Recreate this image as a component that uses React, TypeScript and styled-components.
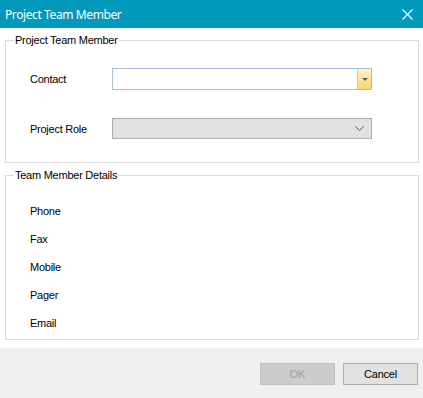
import React from "react";
import styled, {createGlobalStyle} from "styled-components";

const GlobalStyle = createGlobalStyle`
  html, body {
    margin: 0;
    padding: 0;
    background: #ffffff;
  }
`;

const LABEL_FONT = `"Liberation Sans", Arial, sans-serif`;

function CloseIcon() {
    return (
        <svg width="11" height="11" viewBox="0 0 11 11">
            <path d="M0.5 0.5 L10.5 10.5 M10.5 0.5 L0.5 10.5" stroke="#ffffff" strokeWidth="1.1" fill="none"/>
        </svg>
    );
}

function Chevron() {
    return (
        <svg width="9" height="5" viewBox="0 0 9 5">
            <path d="M0.5 0.5 L4.5 4.5 L8.5 0.5" stroke="#555555" strokeWidth="1" fill="none"/>
        </svg>
    );
}

function App() {
    const details = ["Phone", "Fax", "Mobile", "Pager", "Email"];

    return (
        <Window>
            <GlobalStyle/>
            <TitleBar>
                <Title>Project Team Member</Title>
                <CloseButton><CloseIcon/></CloseButton>
            </TitleBar>
            <Body>
                <Group top={5}>
                    <Legend>Project Team Member</Legend>
                    <GroupContent bottomPad={23}>
                        <FieldRow>
                            <Label>Contact</Label>
                            <ContactCombo>
                                <ComboText/>
                                <DropButton><Triangle/></DropButton>
                            </ContactCombo>
                        </FieldRow>
                        <FieldRow gap={28}>
                            <Label>Project Role</Label>
                            <RoleCombo>
                                <ComboText/>
                                <ChevronBox><Chevron/></ChevronBox>
                            </RoleCombo>
                        </FieldRow>
                    </GroupContent>
                </Group>
                <Group top={5}>
                    <Legend>Team Member Details</Legend>
                    <GroupContent bottomPad={2}>
                        <DetailList>
                            {details.map(name => <DetailRow key={name}>{name}</DetailRow>)}
                        </DetailList>
                    </GroupContent>
                </Group>
            </Body>
            <Footer>
                <DialogButton disabled>OK</DialogButton>
                <DialogButton>Cancel</DialogButton>
            </Footer>
        </Window>
    );
}

const Window = styled.div`
  width: 423px;
  height: 398px;
  display: flex;
  flex-direction: column;
  background: #ffffff;
  overflow: hidden;
`

const TitleBar = styled.div`
  height: 28px;
  flex: none;
  background: #0099bc;
  display: flex;
  align-items: center;
  justify-content: space-between;
  padding: 0 10px 0 5px;
`

const Title = styled.span`
  color: #ffffff;
  font-family: "Noto Sans", "Open Sans", sans-serif;
  font-size: 12px;
  letter-spacing: -0.4px;
`

const CloseButton = styled.div`
  display: flex;
  align-items: center;
  padding-top: 1px;
`

const Body = styled.div`
  flex: 1;
  padding: 0 4px 0 5px;
`

const Group = styled.fieldset<{top: number}>`
  margin: ${({top}) => top}px 0 0 0;
  border: 1px solid #dcdcdc;
  padding: 0;
  font-family: ${LABEL_FONT};
  font-size: 11px;
  letter-spacing: -0.25px;
  color: #000000;
`

const Legend = styled.legend`
  margin-left: 8px;
  padding: 0 1px;
  line-height: 14px;
  font-size: 11px;
`

const GroupContent = styled.div<{bottomPad: number}>`
  padding: 0 0 ${({bottomPad}) => bottomPad}px 24px;
`

const FieldRow = styled.div<{gap?: number}>`
  display: grid;
  grid-template-columns: 82px 260px;
  align-items: center;
  margin-top: ${({gap}) => gap ?? 21}px;
`

const Label = styled.span`
  line-height: 14px;
`

const ComboBase = styled.div`
  display: flex;
  box-sizing: border-box;
`

const ContactCombo = styled(ComboBase)`
  height: 22px;
  border: 1px solid #a9bedf;
  background: #ffffff;
`

const RoleCombo = styled(ComboBase)`
  height: 21px;
  border: 1px solid #adadad;
  background: #e1e1e1;
`

const ComboText = styled.div`
  flex: 1;
`

const DropButton = styled.div`
  width: 13px;
  border-left: 1px solid #e3c77a;
  background: linear-gradient(to bottom, #fff4cc 0%, #ffe595 50%, #fdd46f 100%);
  display: flex;
  align-items: center;
  justify-content: center;
`

const Triangle = styled.div`
  width: 0;
  height: 0;
  border-left: 3px solid transparent;
  border-right: 3px solid transparent;
  border-top: 3px solid #4d6185;
  margin-top: 1px;
`

const ChevronBox = styled.div`
  width: 20px;
  display: flex;
  align-items: center;
  justify-content: center;
  padding-right: 2px;
`

const DetailList = styled.div`
  display: flex;
  flex-direction: column;
  padding-top: 15px;
`

const DetailRow = styled.div`
  height: 28px;
  line-height: 28px;
`

const Footer = styled.div`
  height: 50px;
  flex: none;
  background: #efefef;
  display: flex;
  justify-content: flex-end;
  align-items: flex-start;
  gap: 8px;
  padding: 15px 5px 0 0;
  box-sizing: border-box;
`

const DialogButton = styled.button`
  width: 75px;
  height: 22px;
  margin: 0;
  padding: 0;
  font-family: ${LABEL_FONT};
  font-size: 11px;
  letter-spacing: -0.2px;
  border: 1px solid #adadad;
  background: #e1e1e1;
  color: #000000;

  &:disabled {
    border-color: #bfbfbf;
    background: #cccccc;
    color: #a0a0a0;
  }
`

export default App;
